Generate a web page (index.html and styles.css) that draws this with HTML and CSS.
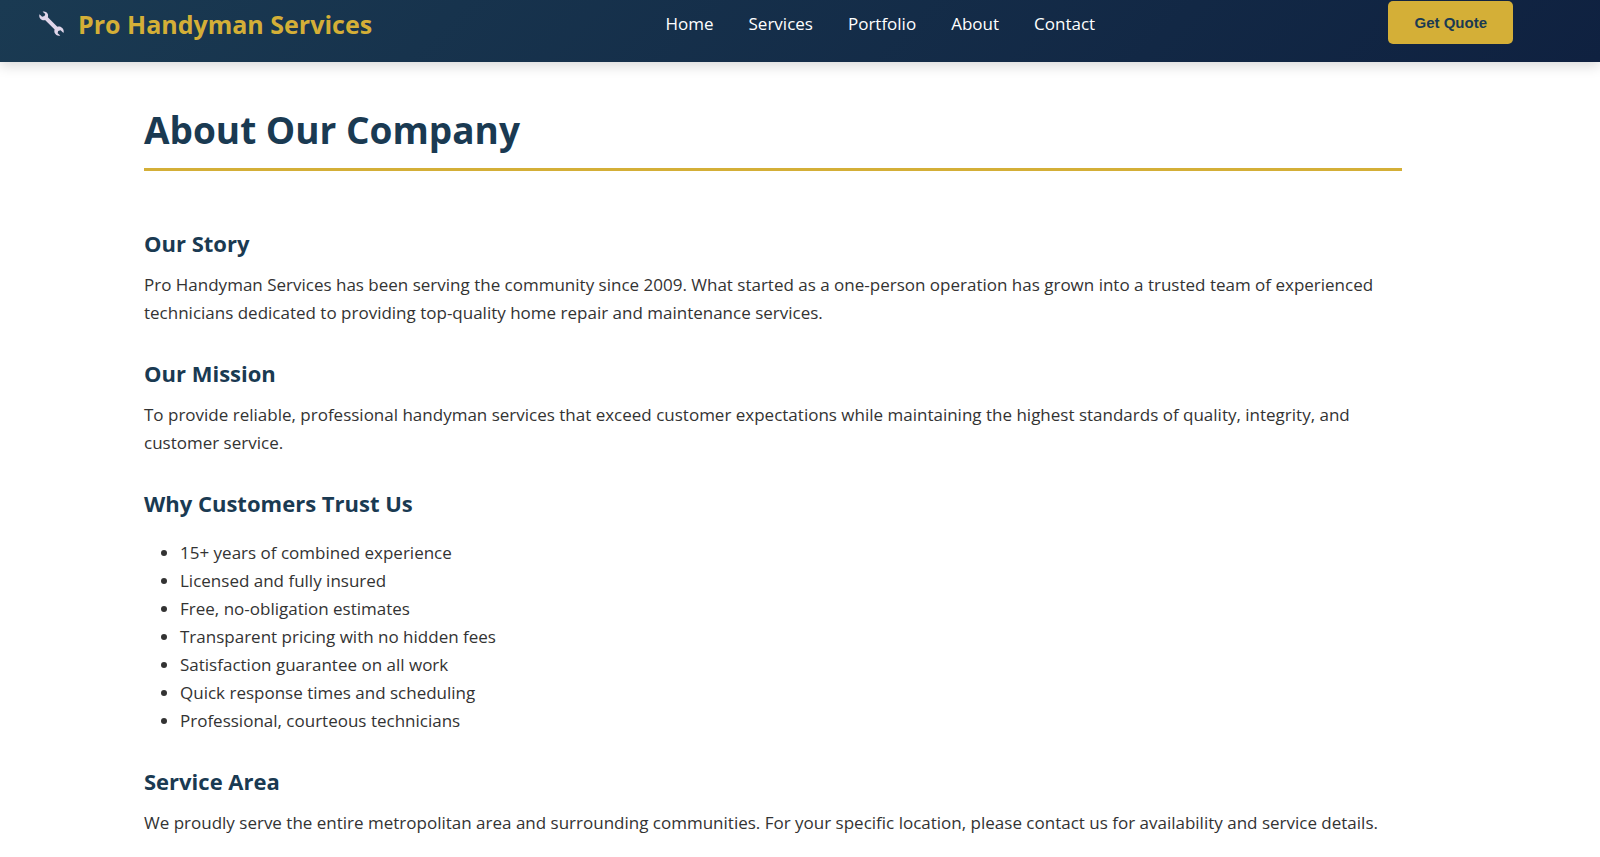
FILE: index.html
```
<!DOCTYPE html>
<html lang="en">

<head>
    <meta charset="UTF-8">
    <meta name="viewport" content="width=device-width, initial-scale=1.0">
    <title>About - Pro Handyman Services</title>
    <link rel="stylesheet" href="styles.css">
</head>

<body>

    <header class="header">
        <div class="logo">
            <svg class="logo-icon" viewBox="0 0 24 24" aria-hidden="true">
                <path d="M3.5 0.6 C5.6 0 8 1.2 8.6 3.4 C8.8 4.4 8.7 5.2 8.5 6 L17.6 15.2 C18.6 14.9 20 14.8 21.3 15.5 C23.4 16.6 24.2 18.9 23.5 21 L20.7 18.5 L18.4 19.1 L17.9 21.3 L20.4 23.5 C18.3 24.2 16 23.2 15.1 21.2 C14.6 20.1 14.6 18.9 15 17.8 L5.8 8.7 C4.8 9 3.6 8.9 2.5 8.3 C0.5 7.2 -0.2 5 0.5 3 L3 5.4 L5.3 4.9 L6 2.8 Z" />
            </svg>
            <span>Pro Handyman Services</span>
        </div>
        <nav class="nav">
            <a href="#home">Home</a>
            <a href="#services">Services</a>
            <a href="#portfolio">Portfolio</a>
            <a href="#about">About</a>
            <a href="#contact">Contact</a>
        </nav>
        <button class="quote-button" type="button">Get Quote</button>
    </header>

    <main class="content">
        <h1>About Our Company</h1>

        <section>
            <h2>Our Story</h2>
            <p>Pro Handyman Services has been serving the community since 2009. What started as a one-person operation has grown into a trusted team of experienced technicians dedicated to providing top-quality home repair and maintenance services.</p>
        </section>

        <section>
            <h2>Our Mission</h2>
            <p>To provide reliable, professional handyman services that exceed customer expectations while maintaining the highest standards of quality, integrity, and customer service.</p>
        </section>

        <section>
            <h2>Why Customers Trust Us</h2>
            <ul>
                <li>15+ years of combined experience</li>
                <li>Licensed and fully insured</li>
                <li>Free, no-obligation estimates</li>
                <li>Transparent pricing with no hidden fees</li>
                <li>Satisfaction guarantee on all work</li>
                <li>Quick response times and scheduling</li>
                <li>Professional, courteous technicians</li>
            </ul>
        </section>

        <section>
            <h2>Service Area</h2>
            <p>We proudly serve the entire metropolitan area and surrounding communities. For your specific location, please contact us for availability and service details.</p>
        </section>
    </main>

</body>

</html>
```
FILE: styles.css
```
* {
    box-sizing: border-box;
}

body {
    margin: 0;
    font-family: "Segoe UI", "Open Sans", "Noto Sans", sans-serif;
    font-size: 17px;
    line-height: 28px;
    color: #333;
    background-color: #fff;
}

/* Header */
.header {
    display: flex;
    justify-content: space-between;
    align-items: center;
    padding: 1px 87px 18px 39px;
    background: linear-gradient(135deg, #1a3a52, #0f2140);
    box-shadow: 0 4px 12px rgba(0, 0, 0, 0.15);
}

.logo,
.nav {
    display: flex;
    align-items: center;
    padding-top: 2px;
}

.logo {
    gap: 14px;
    color: #d4af37;
    font-size: 25px;
    font-weight: 700;
}

.logo-icon {
    width: 25px;
    height: 25px;
    fill: #e0d6ea;
}

.nav {
    gap: 35px;
}

.nav a {
    color: #fff;
    font-weight: 500;
    text-decoration: none;
}

.nav a:hover {
    color: #d4af37;
}

.quote-button {
    height: 43px;
    padding: 0 26px;
    border: none;
    border-radius: 5px;
    background-color: #d4af37;
    color: #1a3a52;
    font-family: Arial, "Liberation Sans", sans-serif;
    font-size: 15px;
    font-weight: 700;
    cursor: pointer;
}

/* About */
.content {
    padding: 36px 198px 0 144px;
}

h1 {
    margin: 0 0 54px;
    padding-bottom: 6px;
    border-bottom: 3px solid #d4af37;
    color: #1a3a52;
    font-size: 37px;
    line-height: 64px;
}

h2 {
    margin: 0 0 10px;
    color: #1a3a52;
    font-size: 22px;
    line-height: 36px;
}

p {
    margin: 0 0 28px;
}

ul {
    margin: 18px 0 28px;
    padding-left: 36px;
}
```
